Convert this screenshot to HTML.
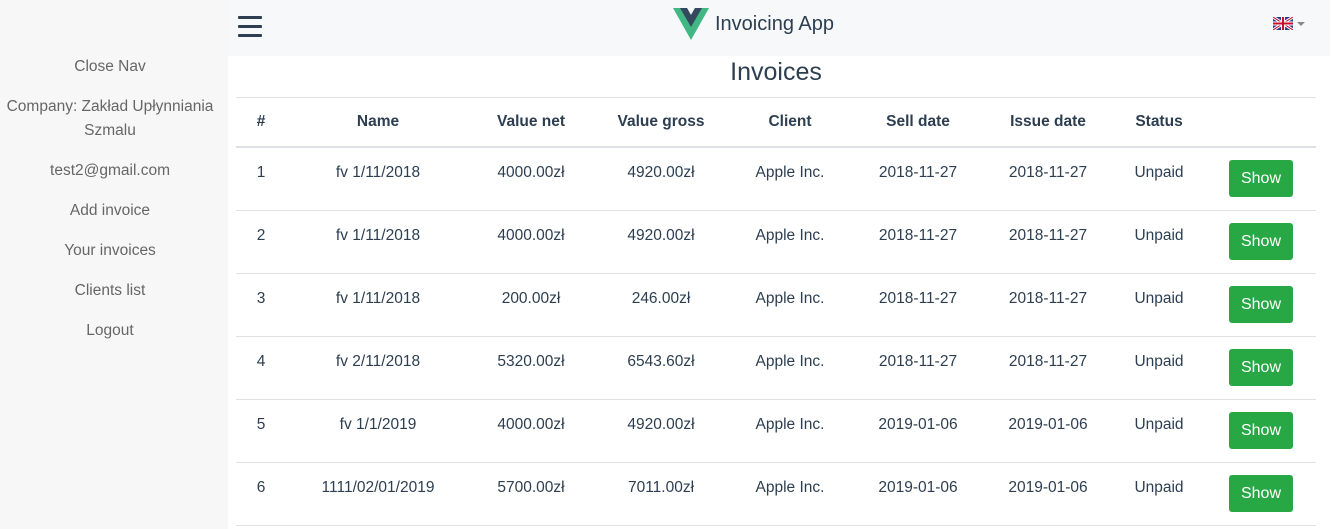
<!DOCTYPE html>
<html><head><meta charset="utf-8"><style>
*{margin:0;padding:0;box-sizing:border-box}
body{width:1337px;height:529px;overflow:hidden;background:#fff;font-family:"Liberation Sans",sans-serif;color:#2c3e50;position:relative}
.side{position:absolute;left:0;top:0;width:228px;height:529px;background:#f7f7f7}
.side div{position:absolute;left:0;width:220px;text-align:center;font-size:15.5px;color:#666;line-height:24px}
.nav{position:absolute;left:228px;top:0;width:1102px;height:56px;background:#f7f8fa}
.burger{position:absolute;left:10px;top:16px;width:24px}
.burger i{display:block;height:3px;background:#2c3e50;margin-bottom:6px;border-radius:1px}
.brand{position:absolute;left:445px;top:8px;font-size:20px;display:flex;align-items:center;gap:6px}
h1{position:absolute;left:236px;width:1080px;top:58px;text-align:center;font-weight:normal;font-size:25px}
.line{position:absolute;left:236px;width:1080px;height:1px;background:#dee2e6}
.cell{position:absolute;text-align:center;font-size:15.5px;transform:translateX(-50%);white-space:nowrap}
.th{font-weight:bold}
.btn{position:absolute;left:1229px;width:64px;height:37px;background:#28a745;color:#fff;border-radius:3px;font-size:16px;text-align:center;line-height:37px}
</style></head><body>
<div class="side">
<div style="top:55px">Close Nav</div>
<div style="top:95px">Company: Zakład Upłynniania<br>Szmalu</div>
<div style="top:159px">test2@gmail.com</div>
<div style="top:199px">Add invoice</div>
<div style="top:239px">Your invoices</div>
<div style="top:279px">Clients list</div>
<div style="top:319px">Logout</div>
</div>
<div class="nav">
<div class="burger"><i></i><i></i><i></i></div>
<div class="brand"><svg width="36" height="32" viewBox="0 0 36 32"><path d="M0 0h14l4 7 4-7h14L18 32z" fill="#41b883"/><path d="M7 0h7l4 7 4-7h7L18 19z" fill="#34495e"/></svg><span>Invoicing App</span></div>
<svg style="position:absolute;left:1045px;top:17px" width="20" height="13" viewBox="0 0 20 13"><rect width="20" height="13" fill="#2a3f8f"/><path d="M0 0L20 13M20 0L0 13" stroke="#fff" stroke-width="3"/><path d="M0 0L20 13M20 0L0 13" stroke="#c8102e" stroke-width="1"/><path d="M10 0v13M0 6.5h20" stroke="#fff" stroke-width="4"/><path d="M10 0v13M0 6.5h20" stroke="#c8102e" stroke-width="2"/></svg>
<div style="position:absolute;left:1069px;top:22px;border-left:4px solid transparent;border-right:4px solid transparent;border-top:4px solid #888"></div>
</div>
<h1>Invoices</h1>
<div class="line" style="top:97px"></div>
<div class="line" style="top:146px;height:2px"></div>
<div id="t"></div>
<script>
var cx=[261,378,531,661,790,918,1048,1159];
var h=["#","Name","Value net","Value gross","Client","Sell date","Issue date","Status"];
var s='';
h.forEach(function(v,i){s+='<div class="cell th" style="left:'+cx[i]+'px;top:113px">'+v+'</div>'});
var rows=[["1","fv 1/11/2018","4000.00zł","4920.00zł","Apple Inc.","2018-11-27","2018-11-27","Unpaid"],
["2","fv 1/11/2018","4000.00zł","4920.00zł","Apple Inc.","2018-11-27","2018-11-27","Unpaid"],
["3","fv 1/11/2018","200.00zł","246.00zł","Apple Inc.","2018-11-27","2018-11-27","Unpaid"],
["4","fv 2/11/2018","5320.00zł","6543.60zł","Apple Inc.","2018-11-27","2018-11-27","Unpaid"],
["5","fv 1/1/2019","4000.00zł","4920.00zł","Apple Inc.","2019-01-06","2019-01-06","Unpaid"],
["6","1111/02/01/2019","5700.00zł","7011.00zł","Apple Inc.","2019-01-06","2019-01-06","Unpaid"]];
rows.forEach(function(r,j){var y=164+63*j;
r.forEach(function(v,i){s+='<div class="cell" style="left:'+cx[i]+'px;top:'+y+'px">'+v+'</div>'});
s+='<div class="btn" style="top:'+(160+63*j)+'px">Show</div>';
s+='<div class="line" style="top:'+(210+63*j)+'px"></div>';});
document.getElementById('t').innerHTML=s;
</script>
</body></html>
